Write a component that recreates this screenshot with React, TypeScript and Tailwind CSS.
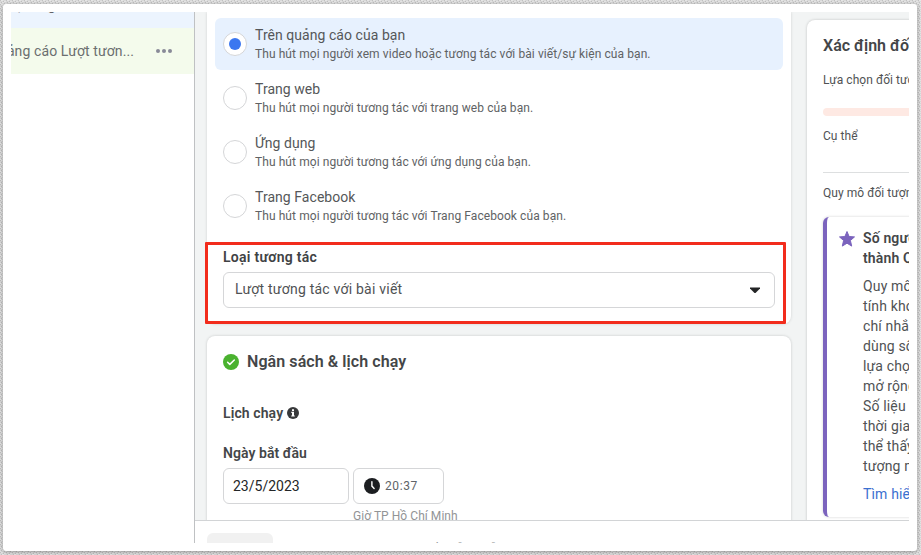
import React from "react";

const options = [
  { title: "Trên quảng cáo của bạn", note: "Thu hút mọi người xem video hoặc tương tác với bài viết/sự kiện của bạn.", active: true },
  { title: "Trang web", note: "Thu hút mọi người tương tác với trang web của bạn." },
  { title: "Ứng dụng", note: "Thu hút mọi người tương tác với ứng dụng của bạn." },
  { title: "Trang Facebook", note: "Thu hút mọi người tương tác với Trang Facebook của bạn." },
];

const noticeLines = ["Quy mô đối tượng ước", "tính khoảng cách", "chí nhắm mục tiêu", "dùng số liệu", "lựa chọn", "mở rộng", "Số liệu này", "thời gian", "thể thấy", "tượng mục tiêu"];

function Texture() {
  return (
    <svg className="absolute inset-0 h-full w-full" aria-hidden="true">
      <defs>
        <pattern id="weave" width="6" height="4" patternUnits="userSpaceOnUse">
          <rect width="6" height="4" fill="#d9d9d9" />
          <path d="M0 0h1v1H0zM3 1h1v1H3zM1 2h1v1H1zM4 3h1v1H4z" fill="#c2c2c2" />
          <path d="M1 0h2v1H1zM4 1h2v1H4zM2 2h2v1H2zM5 3h1v1H5zM0 3h1v1H0z" fill="#e7e7e7" />
        </pattern>
      </defs>
      <rect width="100%" height="100%" fill="url(#weave)" />
    </svg>
  );
}

function Option({ title, note, active }: { title: string; note: string; active?: boolean }) {
  return (
    <div className={`flex h-[52px] items-center gap-2 rounded-md px-2 ${active ? "bg-[#e7f1fe]" : ""}`}>
      <span className="flex size-6 shrink-0 items-center justify-center rounded-full border border-[#d5d6d8] bg-white">
        {active && <span className="size-3 rounded-full bg-[#3b77f0]" />}
      </span>
      <div className="whitespace-nowrap">
        <div className="text-[14px] leading-[18px] tracking-[0.05px] text-[#555759]">{title}</div>
        <div className="-mb-0.5 pt-px text-[12px] leading-[19px] tracking-[0.08px] text-[#606264]">{note}</div>
      </div>
    </div>
  );
}

function Sidebar() {
  return (
    <aside className="h-full w-[184px] shrink-0 overflow-hidden border-r border-[#bfc1c3] bg-white whitespace-nowrap">
      <div className="h-4 overflow-hidden bg-[#ecf4fe] text-[14px] text-[#606366]">
        <div className="-mt-[16px] -ml-[4px] leading-[18px]">Bật ứng</div>
      </div>
      <div className="flex h-[46px] items-center justify-between bg-[#f4fbec] pr-[22px]">
        <div className="flex w-[123px] justify-end overflow-hidden text-[14px] tracking-[0.1px] text-[#6b6f70]">Quảng cáo Lượt tươn...</div>
        <div className="flex gap-[2px]">
          <i className="size-1 rounded-full bg-[#888a98]" />
          <i className="size-1 rounded-full bg-[#888a98]" />
          <i className="size-1 rounded-full bg-[#888a98]" />
        </div>
      </div>
    </aside>
  );
}

function Engagement() {
  return (
    <section className="relative h-[312px] shrink-0 rounded-b-lg bg-white px-2 pt-1.5 shadow-[0_0_3px_rgba(0,0,0,0.15)]">
      <div className="flex flex-col gap-0.5">
        {options.map((o) => (
          <Option key={o.title} title={o.title} note={o.note} active={o.active} />
        ))}
      </div>
      <div className="px-2 pt-[15px]">
        <div className="text-[14px] leading-5 font-semibold tracking-[0.27px] text-[#404244]">Loại tương tác</div>
        <div className="mt-[5px] flex h-9 items-center justify-between rounded-md border border-[#d5d6d8] pr-[13px] pl-[11px] text-[14px] tracking-[0.22px] text-[#505254]">
          <span className="pb-0.5">Lượt tương tác với bài viết</span>
          <svg width="12" height="7" viewBox="0 0 12 7" fill="#242526"><path d="M1 0.5h10v1L7 5.5q-1 1-2 0L1 1.5z" /></svg>
        </div>
      </div>
      <div className="absolute top-[230px] -left-0.5 h-[82px] w-[581px] rounded-[1px] border-3 border-[#f22c1c]" />
    </section>
  );
}

function Budget() {
  return (
    <section className="h-[220px] shrink-0 rounded-t-lg bg-white px-4 text-[#444648] shadow-[0_0_3px_rgba(0,0,0,0.18)]">
      <h2 className="flex items-center gap-2 pt-4 text-[16px] leading-5 font-semibold tracking-[0.08px]">
        <svg width="16" height="16" viewBox="0 0 16 16"><circle cx="8" cy="8" r="8" fill="#4ab22f" /><path d="M4.6 8.2l2.2 2.2 4.5-4.4" fill="none" stroke="#fff" strokeWidth="1.5" strokeLinecap="round" strokeLinejoin="round" /></svg>
        Ngân sách &amp; lịch chạy
      </h2>
      <div className="mt-[31px] flex items-center gap-1 text-[14px] leading-5 font-semibold tracking-[0.1px]">
        Lịch chạy
        <svg width="12" height="12" viewBox="0 0 12 12"><circle cx="6" cy="6" r="6" fill="#38393b" /><path d="M5 2.3h2v1.6H5zM4.3 4.8H7v3.6h.8v1.1H4.2V8.4H5V5.9h-.7z" fill="#fff" /></svg>
      </div>
      <div className="mt-5 text-[14px] leading-5 font-semibold tracking-[0.05px]">Ngày bắt đầu</div>
      <div className="mt-[5px] flex gap-1">
        <div className="flex h-9 w-[126px] items-center rounded-md border border-[#d5d6d8] pl-[9px] text-[14px] tracking-[0px] text-[#242628]">23/5/2023</div>
        <div>
          <div className="flex h-9 w-[91px] items-center gap-[5px] rounded-md border border-[#d5d6d8] pl-[10px] text-[12px] tracking-[0.6px] text-[#606468]">
            <svg width="16" height="16" viewBox="0 0 16 16"><circle cx="8" cy="8" r="8" fill="#1c1e21" /><path d="M7.9 3.8v4.3l2.2 2.3" fill="none" stroke="#fff" strokeWidth="1.4" strokeLinecap="round" /></svg>
            20:37
          </div>
          <div className="pt-[3px] text-[12px] leading-[18px] tracking-[0.05px] whitespace-nowrap text-[#929496]">Giờ TP Hồ Chí Minh</div>
        </div>
      </div>
    </section>
  );
}

function Audience() {
  return (
    <section className="mt-2 h-[540px] w-[260px] shrink-0 rounded-lg bg-white px-4 pt-4 whitespace-nowrap text-[#505254] shadow-[0_0_3px_rgba(0,0,0,0.2)]">
      <h2 className="text-[16px] leading-5 font-semibold text-[#444648]">Xác định đối tượng</h2>
      <div className="pt-[15px] text-[12px] leading-[18px] tracking-[0.05px]">Lựa chọn đối tượng của bạn</div>
      <div className="mt-[19px] h-2 rounded-full bg-[#fee9e3]" />
      <div className="pt-[11px] text-[12px] leading-[18px] tracking-[0.05px]">Cụ thể</div>
      <div className="mt-[27px] border-t border-[#dddfe0]" />
      <div className="pt-[11px] text-[12px] leading-[18px] tracking-[0.05px]">Quy mô đối tượng ước tính</div>
      <div className="mt-[15px] flex h-[300px] gap-2 rounded-md border-l-4 border-[#7b63bd] pl-3 shadow-[0_0_3px_rgba(0,0,0,0.18)]">
        <svg className="mt-3.5 shrink-0" width="16" height="16" viewBox="0 0 16 16"><path d="M8 .5l2.1 5 5.4.4-4.1 3.6 1.3 5.6L8 12.2l-4.7 2.9 1.3-5.6L.5 5.9l5.4-.4z" fill="#7b63bd" stroke="#7b63bd" strokeLinejoin="round" /></svg>
        <div className="pt-[11px] text-[14px] leading-5 tracking-[0.15px]">
          <div className="font-semibold text-[#444648]">Số người tham gia</div>
          <div className="font-semibold text-[#444648]">thành Quy mô</div>
          <div className="mt-2">{noticeLines.map((line) => <div key={line}>{line}</div>)}</div>
          <div className="mt-2 text-[#3b70d0]">Tìm hiểu thêm</div>
        </div>
      </div>
    </section>
  );
}

export default function App() {
  return (
    <div className="relative h-[555px] w-[921px] overflow-hidden pt-1 pl-[3px] font-[Roboto,sans-serif]">
      <Texture />
      <div className="relative h-[547px] w-[914px] rounded-[3px] bg-white p-2 shadow-[0_1px_4px_rgba(0,0,0,0.35)]">
        <div className="flex h-[531px] overflow-hidden">
          <Sidebar />
          <main className="flex min-w-0 flex-1 flex-col overflow-hidden">
            <div className="flex h-[508px] shrink-0 gap-4 overflow-hidden bg-[#f2f4f4] pl-3">
              <div className="flex w-[584px] shrink-0 flex-col gap-3">
                <Engagement />
                <Budget />
              </div>
              <Audience />
            </div>
            <footer className="flex h-[23px] shrink-0 overflow-hidden border-t border-[#d2d4d6] bg-white pt-3 pl-3">
              <div className="h-9 w-[66px] shrink-0 rounded-md bg-[#f1f1f1]" />
              <div className="mt-[7px] ml-[148px] text-[12px] leading-[18px] whitespace-nowrap text-[#8a8c8e]">Tiếp diễn thuẫn</div>
            </footer>
          </main>
        </div>
      </div>
    </div>
  );
}
